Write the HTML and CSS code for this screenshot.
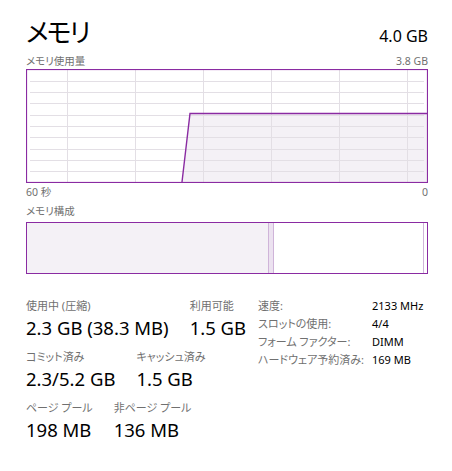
FILE: index.html
```html
<!DOCTYPE html>
<html lang="ja">
<head>
    <meta charset="UTF-8">
    <title>メモリ</title>
    <link rel="stylesheet" href="styles.css">
</head>
<body>
    <div class="panel">
        <div class="header">
            <h1>メモリ</h1>
            <span class="total">4.0 GB</span>
        </div>

        <div class="caption">
            <span>メモリ使用量</span>
            <span>3.8 GB</span>
        </div>

        <svg class="chart" width="402" height="114" viewBox="0 0 402 114">
            <polygon points="156,113 164,44 402,44 402,113" fill="#f4f1f6"/>
            <g stroke="#e3dfe5" stroke-width="1">
                <line x1="41.5" y1="1" x2="41.5" y2="113"/>
                <line x1="109.5" y1="1" x2="109.5" y2="113"/>
                <line x1="177.5" y1="1" x2="177.5" y2="113"/>
                <line x1="245.5" y1="1" x2="245.5" y2="113"/>
                <line x1="313.5" y1="1" x2="313.5" y2="113"/>
                <line x1="381.5" y1="1" x2="381.5" y2="113"/>
                <line x1="4" y1="12.5" x2="398" y2="12.5"/>
                <line x1="4" y1="23.5" x2="398" y2="23.5"/>
                <line x1="4" y1="34.5" x2="398" y2="34.5"/>
                <line x1="4" y1="46.5" x2="398" y2="46.5"/>
                <line x1="4" y1="57.5" x2="398" y2="57.5"/>
                <line x1="4" y1="68.5" x2="398" y2="68.5"/>
                <line x1="4" y1="80.5" x2="398" y2="80.5"/>
                <line x1="4" y1="91.5" x2="398" y2="91.5"/>
                <line x1="4" y1="102.5" x2="398" y2="102.5"/>
            </g>
            <polyline points="156,113 164,44.5 402,44.5" fill="none" stroke="#8a2ba2" stroke-width="1.4"/>
            <rect x="0.5" y="0.5" width="401" height="113" fill="none" stroke="#8a2ba2" stroke-width="1.2"/>
        </svg>

        <div class="caption axis">
            <span>60 秒</span>
            <span>0</span>
        </div>

        <div class="caption section">
            <span>メモリ構成</span>
        </div>

        <div class="composition">
            <div class="seg in-use" style="width: 241px"></div>
            <div class="seg modified" style="width: 4px"></div>
            <div class="seg standby"></div>
            <div class="seg free" style="width: 3px"></div>
        </div>

        <div class="details">
            <div class="stats">
                <div class="stat-row">
                    <div class="stat">
                        <div class="label">使用中 (圧縮)</div>
                        <div class="value">2.3 GB (38.3 MB)</div>
                    </div>
                    <div class="stat">
                        <div class="label">利用可能</div>
                        <div class="value">1.5 GB</div>
                    </div>
                </div>
                <div class="stat-row">
                    <div class="stat">
                        <div class="label">コミット済み</div>
                        <div class="value">2.3/5.2 GB</div>
                    </div>
                    <div class="stat">
                        <div class="label">キャッシュ済み</div>
                        <div class="value">1.5 GB</div>
                    </div>
                </div>
                <div class="stat-row">
                    <div class="stat">
                        <div class="label">ページ プール</div>
                        <div class="value">198 MB</div>
                    </div>
                    <div class="stat">
                        <div class="label">非ページ プール</div>
                        <div class="value">136 MB</div>
                    </div>
                </div>
            </div>

            <div class="info">
                <span class="key">速度:</span><span class="val">2133 MHz</span>
                <span class="key">スロットの使用:</span><span class="val">4/4</span>
                <span class="key">フォーム ファクター:</span><span class="val">DIMM</span>
                <span class="key">ハードウェア予約済み:</span><span class="val">169 MB</span>
            </div>
        </div>
    </div>
</body>
</html>
```

FILE: styles.css
```css
body {
    margin: 0;
    padding: 0;
    background-color: white;
    font-family: "Noto Sans", "Noto Sans CJK JP", sans-serif;
    font-feature-settings: "palt";
    color: #000;
}

.panel {
    padding: 12px 24px 0 26px;
    width: 402px;
}

.header {
    display: flex;
    justify-content: space-between;
    align-items: baseline;
    height: 36px;
    margin-bottom: 6px;
}

    .header h1 {
        margin: 0;
        font-size: 26px;
        font-weight: normal;
        letter-spacing: -2px;
        line-height: 40px;
    }

    .header .total {
        font-size: 16px;
    }

.caption {
    display: flex;
    justify-content: space-between;
    font-size: 10.5px;
    line-height: 14px;
    color: #707070;
}

.chart {
    display: block;
    margin-top: 1px;
}

.axis {
    margin-top: 2px;
}

.section {
    margin-top: 5px;
}

.composition {
    display: flex;
    height: 50px;
    margin-top: 4px;
    border: 1px solid #8a2ba2;
}

    .composition .seg {
        border-right: 1px solid #cfb4d9;
    }

    .composition .in-use {
        background-color: #f4f1f6;
    }

    .composition .modified {
        background-color: #ece2f0;
    }

    .composition .standby {
        flex: 1;
    }

    .composition .free {
        border-right: none;
    }

.details {
    display: flex;
    align-items: flex-start;
    margin-top: 24px;
}

.stats {
    width: 232px;
}

.stat-row {
    display: flex;
    gap: 21px;
    margin-bottom: 7px;
}

    .stat .label {
        font-size: 11px;
        line-height: 16px;
        color: #707070;
    }

    .stat .value {
        font-size: 18.5px;
        line-height: 28px;
    }

.info {
    display: grid;
    grid-template-columns: 114px auto;
    font-size: 11px;
    line-height: 18px;
    margin-top: -1px;
}

    .info .key {
        color: #707070;
        white-space: nowrap;
    }
```
